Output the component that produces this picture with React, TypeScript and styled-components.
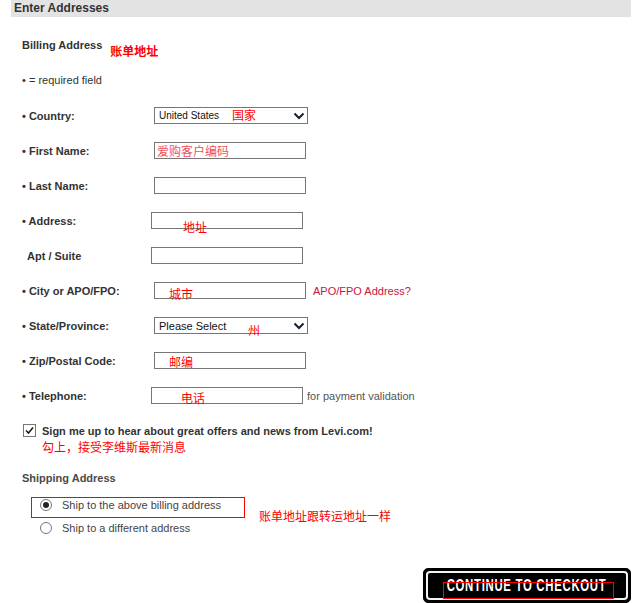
import styled, { createGlobalStyle } from 'styled-components'

const GlobalStyle = createGlobalStyle`
    body {
        margin: 0;
        background: #ffffff;
        font-family: "Liberation Sans", Arial, sans-serif;
        color: #333333;
    }
`

const Page = styled.div`
    width: 620px;
    margin-left: 11px;
`

const Header = styled.div`
    height: 17px;
    background: #e3e3e3;
    display: flex;
    align-items: center;
    padding-left: 3px;
`

const Title = styled.h2`
    margin: 0;
    font-size: 12px;
    font-weight: bold;
    color: #333333;
    line-height: 17px;
`

const Form = styled.div`
    padding-left: 11px;
`

const SectionHead = styled.div<{ $top: number }>`
    display: flex;
    align-items: flex-start;
    height: 14px;
    margin-top: ${p => p.$top}px;
    font-size: 11px;
    font-weight: bold;
    line-height: 14px;
    color: #333333;
`

const Note = styled.span`
    font-family: "Noto Sans CJK SC", "Liberation Sans", sans-serif;
    font-size: 12px;
    line-height: 13px;
    color: #ff0000;
    white-space: nowrap;
`

const HeadNote = styled(Note)`
    margin-left: 8px;
    margin-top: 6px;
`

const Required = styled.div`
    margin-top: 21px;
    font-size: 11px;
    line-height: 14px;
    color: #333333;
`

const Rows = styled.div`
    margin-top: 11px;
`

const Row = styled.div`
    display: flex;
    align-items: center;
    height: 35px;
`

const Label = styled.div<{ $plain?: boolean }>`
    width: 132px;
    flex: none;
    padding-left: ${p => (p.$plain ? 5 : 0)}px;
    box-sizing: border-box;
    font-size: 11px;
    font-weight: bold;
    color: #333333;
    white-space: nowrap;
`

const Field = styled.div<{ $shift?: number }>`
    position: relative;
    margin-left: ${p => p.$shift ?? 0}px;
    width: 152px;
    height: 17px;
    flex: none;
`

const TextInput = styled.input`
    display: block;
    width: 100%;
    height: 100%;
    box-sizing: border-box;
    margin: 0;
    padding: 0 3px;
    border: 1px solid #767676;
    border-radius: 0;
    background: #ffffff;
    font-family: "Liberation Sans", Arial, sans-serif;
    font-size: 11px;
    outline: none;
`

const SelectInput = styled.select<{ $small?: boolean }>`
    display: block;
    width: 154px;
    height: 17px;
    box-sizing: border-box;
    margin: 0;
    padding: 0 0 0 4px;
    border: 1px solid #767676;
    border-radius: 0;
    background: #ffffff;
    appearance: none;
    font-family: "Liberation Sans", Arial, sans-serif;
    font-size: ${p => (p.$small ? 10 : 11)}px;
    color: #111111;
    outline: none;
`

const Chevron = styled.svg`
    position: absolute;
    right: 1px;
    top: 5px;
    pointer-events: none;
`

const FieldNote = styled(Note)<{ $x: number; $y: number; $soft?: boolean }>`
    position: absolute;
    left: ${p => p.$x}px;
    top: ${p => p.$y}px;
    color: ${p => (p.$soft ? '#ef4f57' : '#ff0000')};
    pointer-events: none;
`

const Aside = styled.span<{ $link?: boolean; $gap: number }>`
    margin-left: ${p => p.$gap}px;
    font-size: 11px;
    color: ${p => (p.$link ? '#c8163d' : '#555555')};
    white-space: nowrap;
`

const Signup = styled.div`
    margin-top: 11px;
    display: flex;
    align-items: flex-start;
    padding-left: 1px;
`

const CheckBox = styled.span`
    width: 13px;
    height: 13px;
    box-sizing: border-box;
    border: 1px solid #777777;
    background: #ffffff;
    display: flex;
    align-items: center;
    justify-content: center;
    flex: none;
`

const SignupText = styled.div`
    margin-left: 6px;
    display: flex;
    flex-direction: column;
`

const SignupLabel = styled.span`
    font-size: 11px;
    font-weight: bold;
    line-height: 14px;
    color: #333333;
`

const SignupNote = styled(Note)`
    margin-top: 1px;
    line-height: 16px;
`

const ShipHead = styled.div`
    margin-top: 16px;
    font-size: 11px;
    font-weight: bold;
    line-height: 14px;
    color: #4a4a4a;
`

const ShipBlock = styled.div`
    margin-top: 12px;
    display: flex;
    align-items: flex-start;
`

const Options = styled.div`
    margin-left: 9px;
    display: flex;
    flex-direction: column;
    gap: 2px;
`

const Option = styled.label<{ $marked?: boolean }>`
    display: flex;
    align-items: center;
    width: 214px;
    box-sizing: border-box;
    border: 1px solid ${p => (p.$marked ? '#ff0000' : 'transparent')};
    padding: ${p => (p.$marked ? '0 0 5px 8px' : '0 0 0 8px')};
    font-size: 11px;
    line-height: 14px;
    color: #444444;
`

const Radio = styled.span<{ $on?: boolean }>`
    width: 12px;
    height: 12px;
    box-sizing: border-box;
    border-radius: 50%;
    border: 1px solid #777777;
    background: #ffffff;
    display: flex;
    align-items: center;
    justify-content: center;
    margin-right: 10px;
    flex: none;
    &::after {
        content: '';
        width: 6px;
        height: 6px;
        border-radius: 50%;
        background: ${p => (p.$on ? '#222222' : 'transparent')};
    }
`

const ShipNote = styled(Note)`
    margin-left: 14px;
    margin-top: 12px;
`

const Footer = styled.div`
    margin-top: 32px;
    display: flex;
    justify-content: flex-end;
`

const CheckoutButton = styled.button`
    position: relative;
    width: 208px;
    height: 35px;
    padding: 2px;
    border: 1px solid #000000;
    border-radius: 5px;
    background: #000000;
    cursor: pointer;
    box-sizing: border-box;
`

const ButtonInner = styled.span`
    display: flex;
    align-items: center;
    justify-content: center;
    width: 100%;
    height: 100%;
    box-sizing: border-box;
    border: 2px solid #f2f2f2;
    border-radius: 4px;
    background: #000000;
    overflow: hidden;
`

const ButtonText = styled.span`
    display: inline-block;
    white-space: nowrap;
    color: #ffffff;
    font-family: "Liberation Sans", Arial, sans-serif;
    font-weight: bold;
    font-size: 16px;
    line-height: 16px;
    letter-spacing: 1px;
    transform: scaleX(0.71);
    margin-top: 1px;
`

const ButtonMark = styled.span`
    position: absolute;
    left: 19px;
    top: 13px;
    width: 171px;
    height: 17px;
    box-sizing: border-box;
    border: 1px solid #ff0000;
    pointer-events: none;
`

type Fld = {
    label: string
    required?: boolean
    kind: 'text' | 'select'
    value?: string
    small?: boolean
    shift?: number
    note?: { text: string; x: number; y: number; soft?: boolean }
    aside?: { text: string; link?: boolean; gap: number }
}

const fields: Fld[] = [
    { label: 'Country:', required: true, kind: 'select', value: 'United States', small: true, note: { text: '国家', x: 78, y: 1 } },
    { label: 'First Name:', required: true, kind: 'text', note: { text: '爱购客户编码', x: 3, y: 2, soft: true } },
    { label: 'Last Name:', required: true, kind: 'text' },
    { label: 'Address:', required: true, kind: 'text', shift: -3, note: { text: '地址', x: 32, y: 8 } },
    { label: 'Apt / Suite', kind: 'text', shift: -3 },
    { label: 'City or APO/FPO:', required: true, kind: 'text', note: { text: '城市', x: 15, y: 5 }, aside: { text: 'APO/FPO Address?', link: true, gap: 7 } },
    { label: 'State/Province:', required: true, kind: 'select', value: 'Please Select', note: { text: '州', x: 94, y: 6 } },
    { label: 'Zip/Postal Code:', required: true, kind: 'text', note: { text: '邮编', x: 15, y: 3 } },
    { label: 'Telephone:', required: true, kind: 'text', shift: -3, note: { text: '电话', x: 30, y: 4 }, aside: { text: 'for payment validation', gap: 4 } },
]

function App() {
    return (
        <>
            <GlobalStyle />
            <Page>
                <Header>
                    <Title>Enter Addresses</Title>
                </Header>
                <Form>
                    <SectionHead $top={21}>
                        Billing Address
                        <HeadNote>账单地址</HeadNote>
                    </SectionHead>
                    <Required>• = required field</Required>
                    <Rows>
                        {fields.map(f => (
                            <Row key={f.label}>
                                <Label $plain={!f.required}>{f.required ? `• ${f.label}` : f.label}</Label>
                                <Field $shift={f.shift}>
                                    {f.kind === 'select' ? (
                                        <>
                                            <SelectInput $small={f.small} defaultValue={f.value}>
                                                <option>{f.value}</option>
                                            </SelectInput>
                                            <Chevron width="12" height="8" viewBox="0 0 12 8">
                                                <path d="M1.5 1.5 L6 6 L10.5 1.5" fill="none" stroke="#15202e" strokeWidth="2" />
                                            </Chevron>
                                        </>
                                    ) : (
                                        <TextInput type="text" />
                                    )}
                                    {f.note && (
                                        <FieldNote $x={f.note.x} $y={f.note.y} $soft={f.note.soft}>
                                            {f.note.text}
                                        </FieldNote>
                                    )}
                                </Field>
                                {f.aside && (
                                    <Aside $link={f.aside.link} $gap={f.aside.gap}>
                                        {f.aside.text}
                                    </Aside>
                                )}
                            </Row>
                        ))}
                    </Rows>
                    <Signup>
                        <CheckBox>
                            <svg width="11" height="11" viewBox="0 0 11 11">
                                <path d="M2 5.5 L4.5 8 L9 2.5" fill="none" stroke="#1c1c1c" strokeWidth="1.6" />
                            </svg>
                        </CheckBox>
                        <SignupText>
                            <SignupLabel>Sign me up to hear about great offers and news from Levi.com!</SignupLabel>
                            <SignupNote>勾上，接受李维斯最新消息</SignupNote>
                        </SignupText>
                    </Signup>
                    <ShipHead>Shipping Address</ShipHead>
                    <ShipBlock>
                        <Options>
                            <Option $marked>
                                <Radio $on />
                                Ship to the above billing address
                            </Option>
                            <Option>
                                <Radio />
                                Ship to a different address
                            </Option>
                        </Options>
                        <ShipNote>账单地址跟转运地址一样</ShipNote>
                    </ShipBlock>
                </Form>
                <Footer>
                    <CheckoutButton>
                        <ButtonInner>
                            <ButtonText>CONTINUE TO CHECKOUT</ButtonText>
                        </ButtonInner>
                        <ButtonMark />
                    </CheckoutButton>
                </Footer>
            </Page>
        </>
    )
}

export default App
